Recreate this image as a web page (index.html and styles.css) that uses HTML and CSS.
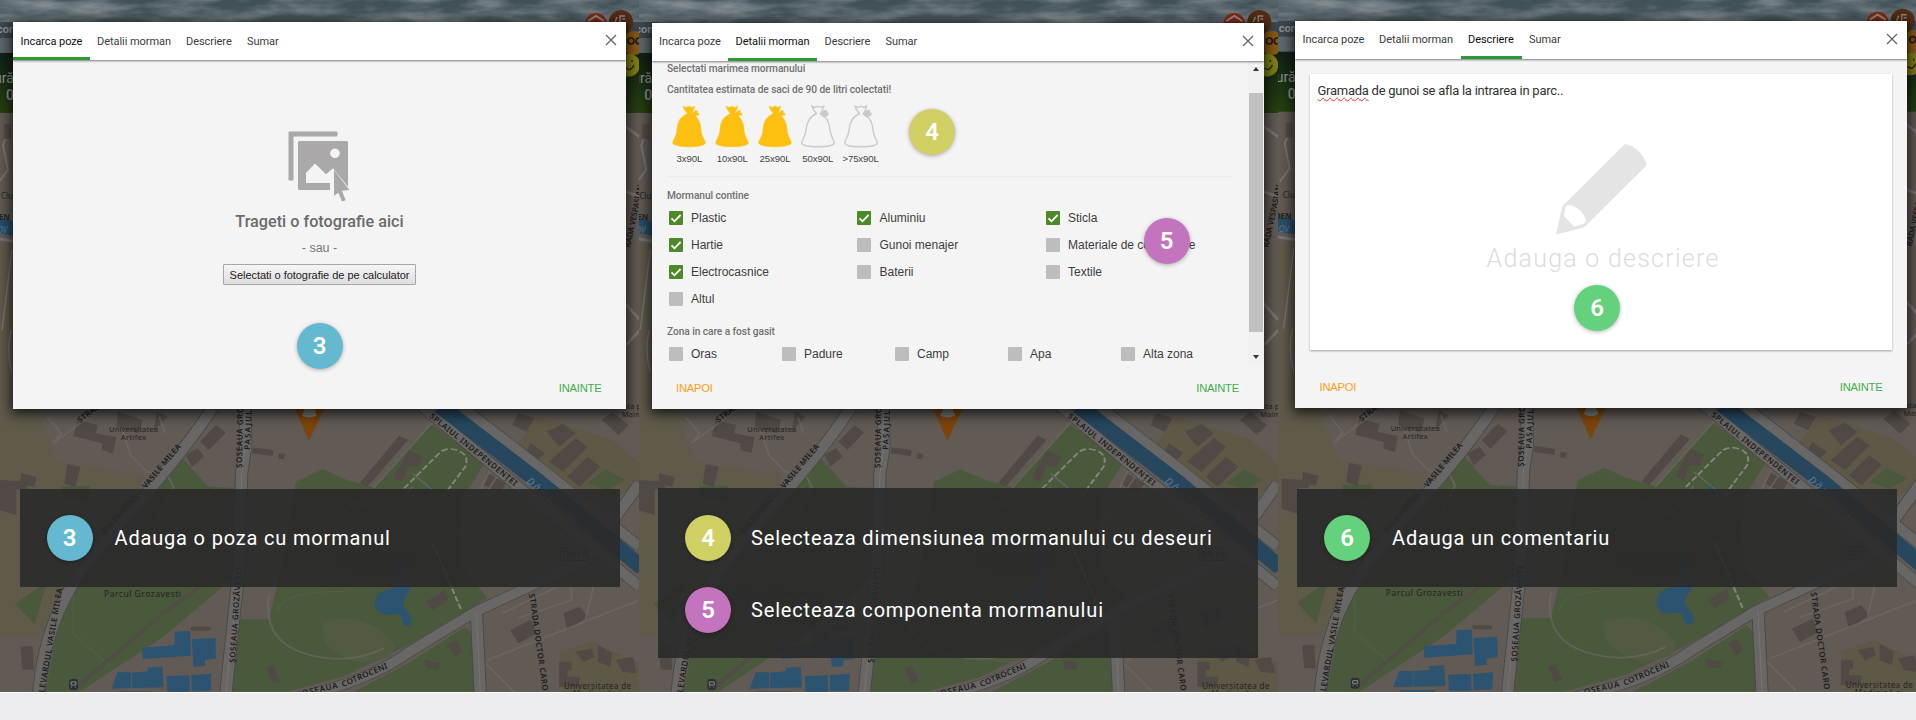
FILE: index.html
```
<!DOCTYPE html>
<html lang="ro">
<head>
<meta charset="utf-8">
<title>Raporteaza un morman</title>
<link rel="stylesheet" href="styles.css">
</head>
<body>
<svg class="defs" width="0" height="0" aria-hidden="true">
  <defs>
    <linearGradient id="sky" x1="0" y1="0" x2="0" y2="1"><stop offset="0" stop-color="#3f4f56"/><stop offset="1" stop-color="#59656a"/></linearGradient>
    <linearGradient id="field" x1="0" y1="0" x2="0" y2="1"><stop offset="0" stop-color="#10201c"/><stop offset=".35" stop-color="#172c12"/><stop offset="1" stop-color="#274011"/></linearGradient>
    <filter id="clouds" x="0" y="0" width="100%" height="100%"><feTurbulence type="fractalNoise" baseFrequency=".018 .07" numOctaves="4" seed="8"/><feColorMatrix values="0 0 0 0 .5  0 0 0 0 .54  0 0 0 0 .56  1.800 0 0 0 -.6"/></filter>
    <symbol id="bag" viewBox="0 0 34 43" overflow="visible">
      <path d="M11 1.2L14 2.5 17 1.2 20 2.5 22.700 1.200Q22 5 19.500 8.500C26 12 28.500 17 29 25C29.500 32 33.500 35.500 33.300 38C32 43 2 43 .700 38C.500 35.500 4.500 32 5 25C5.500 17 8 12 15.500 8.500Q12 5 11 1.200Z"/>
      <path fill="currentColor" d="M19.500 9L23.500 5.500 25.500 6 24.500 7.800 27 8.300 26.500 10.200 24 10 24 11.700 22.500 11.500Z"/>
    </symbol>
    <symbol id="tick" viewBox="0 0 14 14"><path d="M2.500 7.300L5.500 10.300L11.600 4" fill="none" stroke="#fff" stroke-width="1.800"/></symbol>
    <g id="map">
      <rect x="-6" width="651" height="700" fill="#615a55"/>
      <rect x="-6" y="-2" width="651" height="56" fill="url(#sky)"/>
      <rect x="-6" y="-2" width="651" height="26" filter="url(#clouds)" opacity=".6"/>
      <path d="M-6 22H20V38H-6ZM600 22H645V38H600Z" fill="#3d474f"/>
      <rect x="-6" y="38" width="651" height="16" fill="#5c686c"/>
      <rect x="-6" y="53" width="651" height="60" fill="url(#field)"/>
      <g class="hero-text"><text x="-3" y="33" font-size="11" font-weight="700">com</text><text x="-6" y="83" font-size="14">ură</text><text x="6" y="100" font-size="14" font-weight="500">0</text></g>
      <circle cx="596" cy="24" r="11" fill="#812a17"/><path d="M588 21l8-5 8 5" fill="none" stroke="#9e8980" stroke-width="2"/>
      <circle cx="621" cy="22" r="12" fill="#552d15"/><path d="M615 22l2-5M620 22v-6h5M622 19h3" fill="none" stroke="#978578" stroke-width="1.500"/>
      <circle cx="634" cy="43" r="12" fill="#8a5a12"/><g fill="none" stroke="#241d16" stroke-width="1.700"><circle cx="631" cy="41" r="3"/><circle cx="639" cy="41" r="3"/></g>
      <circle cx="628.500" cy="65" r="11.500" fill="#817f15"/><path d="M626 68q5 4 8-3M632 60v2" fill="none" stroke="#282b10" stroke-width="1.500"/>
      <!-- street plan either side of the dialog -->
      <path d="M-6 244H20V420H-6Z" fill="#5f5a4a"/>
      <path d="M-6 215L20 224V237L-6 232Z" fill="#294d67"/>
      <g fill="none" stroke="#777371" stroke-width="3"><path d="M-6 238L20 242"/><path d="M-2 183L8 170 3 145 9 130" stroke-width="2"/><path d="M11 330Q6 352 12 372M12 250L2 330" stroke-width="1.500"/><path d="M622 300L640 320M626 345L640 330M622 124L640 137M622 190L640 197" stroke-width="3"/></g>
      <rect x="4" y="124" width="7" height="15" fill="#544b47"/>
      <!-- lower map, drawn on a stretched grid -->
      <g transform="translate(0 400) scale(.40816 .33333)">
        <path d="M-15 0H80L140 185 350 225 310 400 175 560 95 710H-15Z" fill="#5f5a4a"/>
        <path d="M1320 50L1500 120 1567 190V250L1480 310 1250 160ZM1370 760L1450 725 1567 790V890H1380Z" fill="#5e5846"/>
        <g fill="#4a583c">
          <path d="M440 165L510 260 600 265 590 500 545 560 400 710 190 880H110L135 720 180 560 300 390Z"/>
          <path d="M725 245L790 208 850 240 915 262 1055 72 1190 185 1130 300V500L1195 595 1000 735 840 830 690 880H570L585 658 660 658 690 500Z"/>
          <path d="M1140 680L1165 715V880H860L1000 790ZM37 612L115 545 85 672ZM1440 250L1485 208 1530 240 1490 270ZM150 258H220V300L150 290Z"/>
        </g>
        <path d="M790 670Q870 630 940 700T890 790Q780 760 790 670Z" fill="#525a42"/>
        <g fill="#504945">
          <path d="M165 193L197 200 185 260 158 252ZM52 220L90 232 83 262 50 250ZM0 240L68 245 66 268 40 268 40 345 0 330ZM190 60L240 75 235 100 285 112 277 160 250 150 250 130 180 108ZM290 35L350 60 340 100 285 80ZM385 35L410 50 375 95ZM455 165L485 145 500 170 470 200ZM490 125L530 75 553 98 512 150ZM620 142L670 150 668 168 618 160ZM683 160L698 162 696 178 682 176ZM978 107L1000 120 900 260 882 248ZM1000 150L1035 170 1025 200 1000 198 985 245 965 235Z"/>
          <path d="M1340 95L1380 72 1410 100 1370 140ZM1410 115L1440 140 1380 215 1345 185ZM1300 130L1335 160 1305 195 1280 175ZM1475 60L1500 35 1540 75 1515 105ZM1390 230L1440 170 1470 200 1420 260ZM1195 220L1240 250 1225 280 1185 255ZM1270 40L1310 55 1290 95 1255 75ZM1045 605L1090 570 1097 600 1060 630ZM1040 780L1078 790 1075 810 1045 805ZM1095 735L1115 720 1132 755 1115 770ZM653 805L670 797 687 843 670 850ZM50 740L80 738 83 810 55 808ZM468 680H515V692H468Z"/>
          <path d="M1370 785H1400V810H1390V830H1420V860H1370ZM1410 755L1450 745 1455 770 1430 785ZM1465 735L1500 760 1495 800 1465 785ZM1510 780L1550 770 1560 820 1525 815ZM1380 640L1420 620 1440 650 1390 690ZM1250 690L1300 660 1315 700 1270 730Z"/>
        </g>
        <g fill="#2c536f">
          <path d="M348 743L428 736V695L466 693 468 767 350 777ZM470 718L528 714 529 776 502 780V798L474 801ZM288 817H321V864L273 866ZM323 818L362 814V803L398 800 401 862 323 864ZM408 828L464 826 465 876H410ZM469 826L518 821 516 872 470 874ZM290 874H375V880H290Z"/>
          <path d="M1048 260L1060 258 1057 280 1045 278ZM975 460L992 450V500L985 550 1008 560 988 605Q988 625 1006 645C1015 690 985 685 985 660Q985 635 945 645C910 640 910 590 940 572L970 560Z"/>
        </g>
        <g fill="none" stroke="#6f6c69" stroke-width="5">
          <path d="M115 50L150 100 130 130 240 30M300 90L320 165 360 215 410 225 425 260 380 370M390 50L405 100M660 580Q640 720 745 760T940 745M780 380L875 305 950 350 1010 260M1125 400L1250 170M1205 200L1125 400 1180 540 1330 490M915 265L1065 60M1010 220L1070 280M1140 345L1370 430M1300 540L1480 420M1230 640L1400 540V600L1270 655M1195 780L1567 600M1185 785L1260 876M1435 655L1480 430" opacity=".6"/>
          <path d="M180 570V700L270 800M470 560Q440 330 560 235M850 575Q690 570 680 635" stroke-width="3" stroke-dasharray="3 4" opacity=".6"/>
          <path d="M180 870L400 640 545 510" stroke="#514b45" stroke-width="9"/><path d="M180 870L400 640 545 510" stroke="#6a645b" stroke-width="1" stroke-dasharray="5 3"/>
          <path d="M990 265L1080 155Q1100 140 1125 153T1140 200L1085 290M1060 430L1130 630" stroke="#85857e" stroke-dasharray="17 7"/>
        </g>
        <g fill="none" stroke="#484645" stroke-linejoin="round">
          <path d="M520 25C440 175 330 320 250 430C160 560 105 700 95 885M600 20L602 140 592 220 586 500 553 885M700 900C850 860 930 820 1010 750L1165 635 1430 485 1567 250M1167 635L1177 885M1035 20L1270 260 1567 560M1135 25L1330 210 1567 440" stroke-width="32"/>
          <path d="M520 25C440 175 330 320 250 430C160 560 105 700 95 885M600 20L602 140 592 220 586 500 553 885M700 900C850 860 930 820 1010 750L1165 635 1430 485 1567 250M1167 635L1177 885M1035 20L1270 260 1567 560M1135 25L1330 210 1567 440" stroke="#696765" stroke-width="28"/>
          <path d="M1080 20L1320 245 1575 505" stroke="#26475e" stroke-width="43"/>
          <path d="M600 20L602 140 592 220 586 500 553 885M1167 635L1177 885" stroke="#7b7875" stroke-width="2"/>
        </g>
        <path d="M720 20H797L757 122Z" fill="#7b450b"/><path d="M748 20H769L776 47Q757 58 740 47Z" fill="#777"/>
      </g>
      <g class="map-label">
        <text x="1" y="199" font-size="8">Clu</text>
        <text x="-7" y="220" font-size="8" font-weight="700">DEN</text>
        <text x="-3" y="233" font-size="8" class="river">OV</text>
        <text x="109" y="432" textLength="49">Universitatea</text><text x="121" y="440" textLength="25">Artifex</text>
        <text x="104" y="597" textLength="77" font-size="8.500">Parcul Grozavesti</text>
        <text x="337" y="563" textLength="77" font-size="8.500" class="park">Grădina Botanică</text><text x="354" y="572.500" textLength="43" font-size="8.500" class="park">București</text>
        <text x="563" y="558" textLength="24" font-size="8">DN1A</text>
        <text x="564" y="689" textLength="67" font-size="8">Universitatea de</text><text x="573" y="697" textLength="48" font-size="8">Medicină și</text>
        <text x="622" y="409">ista p</text><text x="622" y="417">Malm</text>
      </g>
      <rect x="560.500" y="548.500" width="28" height="12" fill="none" stroke="#3c3b3a"/>
      <g class="street-label">
        <text transform="translate(80 423) rotate(-37)" textLength="26">STRAD</text>
        <text transform="translate(105 535) rotate(-49)" textLength="52">BULEVARDUL</text>
        <text transform="translate(146 489) rotate(-50)" textLength="55">VASILE MILEA</text>
        <text transform="translate(44 693) rotate(-80)" textLength="106">LEVARDUL VASILE MILEA</text>
        <text transform="translate(242 468) rotate(-89)" textLength="72">ȘOSEAUA GROZĂ</text>
        <text transform="translate(250 450) rotate(-88)" textLength="55">PASAJUL LU</text>
        <text transform="translate(235 663) rotate(-86)" textLength="96">ȘOSEAUA GROZĂVEȘTI</text>
        <text transform="translate(429 417) rotate(39)" textLength="110">SPLAIUL INDEPENDENȚEI</text>
        <text transform="translate(303 696) rotate(-13)" textLength="36">OSEAUA</text>
        <text transform="translate(343 687) rotate(-23)" textLength="49">COTROCENI</text>
        <text transform="translate(529 594) rotate(82)" textLength="98">STRADA DOCTOR CARO</text>
        <text transform="translate(630 248) rotate(-78)" textLength="64">RADA VESPASIAN</text>
        <text transform="translate(526 482) rotate(41)" textLength="64" class="river" font-size="10">Dâmbovița</text>
      </g>
      <g transform="translate(69 679)"><rect width="9" height="11" rx="3" fill="#2e3038"/><path d="M2 3h5v3H2zM2 8h1M6 8h1" stroke="#888" fill="none"/></g>
    </g>
  </defs>
</svg>

<main class="steps">
  <section class="scene scene-photo">
    <svg class="backdrop" viewBox="0 0 639 692"><use href="#map"/></svg>
    <div class="dialog">
      <header class="tabs">
        <a class="tab t1 active">Incarca poze</a><a class="tab t2">Detalii morman</a><a class="tab t3">Descriere</a><a class="tab t4">Sumar</a>
        <svg class="close" viewBox="0 0 12 12"><path d="M1 1L11 11M11 1L1 11"/></svg>
      </header>
      <div class="upload">
        <svg class="photo-icon" viewBox="0 0 62 71">
          <path d="M1 1H49V5H5V49H1Z" stroke-width="1" stroke="#aaa8a9" stroke-linejoin="round"/>
          <rect x="10" y="10" width="50" height="49" rx="1.500"/>
          <path class="hole" d="M18 52V42L27 32.500 38 43.300 45 37.300 61 57 61 71H42V52Z"/>
          <circle class="hole" cx="47" cy="22.300" r="4.800"/>
          <path d="M60 53V43L50 34 46 38ZM46 39L61.400 59 54 59.700 57.700 69.200 54 70.500 50.400 61.700 46 64.700Z"/>
        </svg>
        <h2>Trageti o fotografie aici</h2>
        <p>- sau -</p>
        <button class="picker">Selectati o fotografie de pe calculator</button>
      </div>
      <footer class="actions"><span></span><span class="next">INAINTE</span></footer>
      <span class="badge blue pin-3">3</span>
    </div>
    <div class="caption"><div class="row"><span class="badge blue">3</span><span class="words">Adauga o poza cu mormanul</span></div></div>
  </section>

  <section class="scene scene-details">
    <svg class="backdrop" viewBox="0 0 639 692"><use href="#map" x="-.7"/></svg>
    <div class="dialog">
      <header class="tabs">
        <a class="tab t1">Incarca poze</a><a class="tab t2 active">Detalii morman</a><a class="tab t3">Descriere</a><a class="tab t4">Sumar</a>
        <svg class="close" viewBox="0 0 12 12"><path d="M1 1L11 11M11 1L1 11"/></svg>
      </header>
      <div class="scroller">
        <div class="form">
          <h3>Selectati marimea mormanului</h3>
          <h3 class="second">Cantitatea estimata de saci de 90 de litri colectati!</h3>
          <div class="bags">
            <div class="bag full"><svg><use href="#bag"/></svg>3x90L</div>
            <div class="bag full"><svg><use href="#bag"/></svg>10x90L</div>
            <div class="bag full"><svg><use href="#bag"/></svg>25x90L</div>
            <div class="bag"><svg><use href="#bag"/></svg>50x90L</div>
            <div class="bag"><svg><use href="#bag"/></svg>&gt;75x90L</div>
          </div>
          <h3 class="contents">Mormanul contine</h3>
          <div class="checks materials">
            <label><svg class="box on"><use href="#tick"/></svg>Plastic</label><label><svg class="box on"><use href="#tick"/></svg>Aluminiu</label><label><svg class="box on"><use href="#tick"/></svg>Sticla</label>
            <label><svg class="box on"><use href="#tick"/></svg>Hartie</label><label><svg class="box"></svg>Gunoi menajer</label><label><svg class="box"></svg>Materiale de constructie</label>
            <label><svg class="box on"><use href="#tick"/></svg>Electrocasnice</label><label><svg class="box"></svg>Baterii</label><label><svg class="box"></svg>Textile</label>
            <label><svg class="box"></svg>Altul</label>
          </div>
          <h3 class="zone">Zona in care a fost gasit</h3>
          <div class="checks zones"><label><svg class="box"></svg>Oras</label><label><svg class="box"></svg>Padure</label><label><svg class="box"></svg>Camp</label><label><svg class="box"></svg>Apa</label><label><svg class="box"></svg>Alta zona</label></div>
        </div>
        <div class="scrollbar"><i class="up"></i><i class="thumb"></i><i class="down"></i></div>
      </div>
      <footer class="actions"><span class="back">INAPOI</span><span class="next">INAINTE</span></footer>
      <span class="badge olive pin-4">4</span>
      <span class="badge violet pin-5">5</span>
    </div>
    <div class="caption tall">
      <div class="row"><span class="badge olive">4</span><span class="words">Selecteaza dimensiunea mormanului cu deseuri</span></div>
      <div class="row"><span class="badge violet">5</span><span class="words">Selecteaza componenta mormanului</span></div>
    </div>
  </section>

  <section class="scene scene-comment">
    <svg class="backdrop" viewBox="0 0 639 692"><use href="#map" x="3.700" y="-1.300"/></svg>
    <div class="dialog">
      <header class="tabs">
        <a class="tab t1">Incarca poze</a><a class="tab t2">Detalii morman</a><a class="tab t3 active">Descriere</a><a class="tab t4">Sumar</a>
        <svg class="close" viewBox="0 0 12 12"><path d="M1 1L11 11M11 1L1 11"/></svg>
      </header>
      <div class="note">
        <p><span class="typo">Gramada</span> de gunoi se afla la intrarea in parc..</p>
        <svg class="pencil" viewBox="0 0 91 91"><path d="M69 0Q84 3 90.500 19.500L90 22 28 83.500 0 90.500 6.500 62Z"/><path class="wood" d="M9.500 62.500Q12 60 16 61.500Q27 66 30 76Q30 79 27 80L18 82.500 8 72Z"/></svg>
        <div class="hint">Adauga o descriere</div>
      </div>
      <footer class="actions"><span class="back">INAPOI</span><span class="next">INAINTE</span></footer>
      <span class="badge green pin-6">6</span>
    </div>
    <div class="caption"><div class="row"><span class="badge green">6</span><span class="words">Adauga un comentariu</span></div></div>
  </section>
</main>
</body>
</html>
```
FILE: styles.css
```
* { box-sizing: border-box; }
body { margin: 0; background: #ededef; font-family: Roboto, "Liberation Sans", sans-serif; color: #333; height: 720px; overflow: hidden; }
.defs { position: absolute; }
h2, h3, p { margin: 0; }
.steps { display: grid; grid-template-columns: 639px 639px 638px; height: 693px; border-bottom: 1px solid #fff; }
.scene { position: relative; height: 692px; overflow: hidden; }
.backdrop { position: absolute; left: 0; top: 0; width: 639px; height: 692px; }
.hero-text { fill: #8b9495; font-family: Roboto, sans-serif; }
.map-label { fill: #252423; font-family: "Noto Sans", sans-serif; font-size: 7.500px; }
.map-label .park { fill: #30402a; }
.street-label { fill: #1d1c1c; font-family: "Noto Sans", sans-serif; font-size: 8px; font-weight: 600; }
.street-label .river, .map-label .river { fill: #587d98; font-style: italic; font-weight: 400; }

.dialog { position: relative; display: flex; flex-direction: column; background: #f4f4f4; box-shadow: 0 3px 12px 2px rgba(0, 0, 0, .75); }
.scene-photo .dialog { margin: 22px 0 0 13px; width: 613px; height: 387px; }
.scene-details .dialog { margin: 23px 0 0 12.500px; width: 612px; height: 386px; }
.scene-comment .dialog { margin: 21px 0 0 17px; width: 612px; height: 387px; }

.tabs { display: flex; flex: none; height: 38px; background: #fff; position: relative; box-shadow: 0 1px 2px rgba(0, 0, 0, .5); }
.tab { padding: 12px 0 0 7.500px; font-size: 11px; line-height: 14px; letter-spacing: -.05px; color: #3c3c3c; white-space: nowrap; }
.scene-photo .tab { padding-top: 13px; }
.t1 { width: 76.500px; }
.t2 { width: 89px; }
.t3 { width: 61px; }
.t4 { width: 46px; }
.tab.active { border-bottom: 3px solid #2e9a35; color: #111; }
.close { width: 12px; height: 12px; margin: 12px 9.500px 0 auto; fill: none; stroke: #666; stroke-width: 1.300; }

.actions { flex: none; display: flex; justify-content: space-between; height: 42px; padding: 14px 24.500px 0 24.500px; font: 11.200px/14px "Liberation Sans", Arial, sans-serif; letter-spacing: -.2px; }
.back { color: #ff9d16; }
.next { color: #3fae49; }

.upload { flex: 1; display: flex; flex-direction: column; align-items: center; padding-top: 71px; }
.photo-icon { width: 62px; height: 71px; fill: #aaa8a9; margin-left: -2px; }
.photo-icon .hole { fill: #f4f4f4; }
.upload h2 { margin-top: 10px; font-size: 16.200px; line-height: 20px; font-weight: 500; color: #6a6a6a; white-space: nowrap; }
.upload p { margin-top: 8px; font: 12.500px/16px "Liberation Sans", Arial, sans-serif; color: #777; }
.picker { margin-top: 8px; width: 193px; height: 21px; padding: 0; border: 1px solid #a6a6a6; border-radius: 1px; background: linear-gradient(#f6f6f6, #dedede); font: 11px/18px "Liberation Sans", Arial, sans-serif; letter-spacing: -.03px; color: #222; white-space: nowrap; }

.scroller { flex: 1; display: flex; min-height: 0; }
.form { flex: 1; padding: 1px 0 0 15.500px; }
.form h3 { font-size: 10.200px; line-height: 14px; font-weight: 500; letter-spacing: -.07px; color: #717171; white-space: nowrap; }
.form .second { margin-top: 7px; }
.bags { display: flex; width: 565px; height: 72px; margin-top: 8px; padding-left: 1px; border-bottom: 1px solid #ececec; }
.bag { display: flex; flex-direction: column; align-items: center; width: 42.800px; font: 9.600px/12px "Liberation Sans", Arial, sans-serif; letter-spacing: -.1px; color: #444; white-space: nowrap; }
.bag svg { flex: none; width: 34px; height: 43px; margin-bottom: 5px; color: #cacaca; fill: none; stroke: #cacaca; stroke-width: 1.400; overflow: visible; }
.bag.full svg { color: #fdc010; fill: #fdc010; stroke: #fdc010; stroke-width: .6; }
.form .contents { margin-top: 12px; }
.checks { display: grid; font: 12px/16px "Liberation Sans", Arial, sans-serif; color: #3d3d3d; white-space: nowrap; }
.materials { grid-template-columns: repeat(3, 188.500px); grid-auto-rows: 26.800px; margin-top: 2px; }
.zones { grid-template-columns: repeat(5, 113px); grid-auto-rows: 28px; margin-top: 1px; }
.checks label { display: flex; align-items: center; gap: 8.500px; padding-left: 1.500px; }
.box { flex: none; width: 14px; height: 14px; border-radius: 1px; background: #bdbdbd; }
.box.on { background: #4b8a26; }
.form .zone { margin-top: 13px; }
.scrollbar { display: flex; flex-direction: column; align-items: center; width: 16px; background: #f1f1f1; }
.up, .down { width: 0; height: 0; border: 3.500px solid transparent; }
.up { border-top: 0; border-bottom: 4px solid #333; margin-top: 6px; }
.down { border-bottom: 0; border-top: 4px solid #333; margin-top: 23px; }
.thumb { width: 14px; height: 239px; margin-top: 22px; background: #c1c1c1; }

.note { flex: 1; display: flex; flex-direction: column; margin: 15px 15px 16px; padding: 7px 7.500px 0; background: #fff; box-shadow: 0 1px 2px rgba(0, 0, 0, .35); }
.note p { font-size: 13px; line-height: 19px; letter-spacing: -.26px; white-space: nowrap; }
.typo { text-decoration: underline wavy #e33 1px; text-underline-offset: 2px; }
.pencil { width: 91px; height: 91px; margin: 44px 0 0 238px; fill: #e4e4e4; }
.pencil .wood { fill: #fff; }
.hint { margin: 8px 0 0 169px; font-size: 25px; line-height: 32px; font-weight: 300; letter-spacing: 1.250px; color: #dcdcdc; white-space: nowrap; }

.badge { display: flex; flex: none; align-items: center; justify-content: center; width: 46px; height: 46px; border-radius: 50%; color: #fff; font-size: 24px; font-weight: 600; box-shadow: 0 1px 4px rgba(0, 0, 0, .3); }
.blue { background: #64b9d1; }
.olive { background: #cfcf63; }
.violet { background: #c474be; }
.green { background: #64d17c; }
.pin-3, .pin-4, .pin-5, .pin-6 { position: absolute; }
.pin-3 { left: 283.500px; top: 301px; }
.pin-4 { left: 257.500px; top: 86px; }
.pin-5 { left: 492px; top: 195px; }
.pin-6 { left: 279px; top: 264px; }

.caption { position: relative; width: 600px; height: 98px; margin: 80px 0 0 19.500px; padding: 26px 27px; background: rgba(42, 42, 42, .9); }
.scene-details .caption, .scene-comment .caption { margin-left: 19px; }
.scene-comment .caption { margin-top: 81px; }
.caption.tall { height: 170px; margin-top: 79px; padding-top: 27px; }
.row { display: flex; align-items: center; height: 46px; gap: 22px; }
.tall .row { margin-bottom: 26px; gap: 20px; }
.words { color: #fff; font-size: 20px; letter-spacing: .83px; white-space: nowrap; }
```
